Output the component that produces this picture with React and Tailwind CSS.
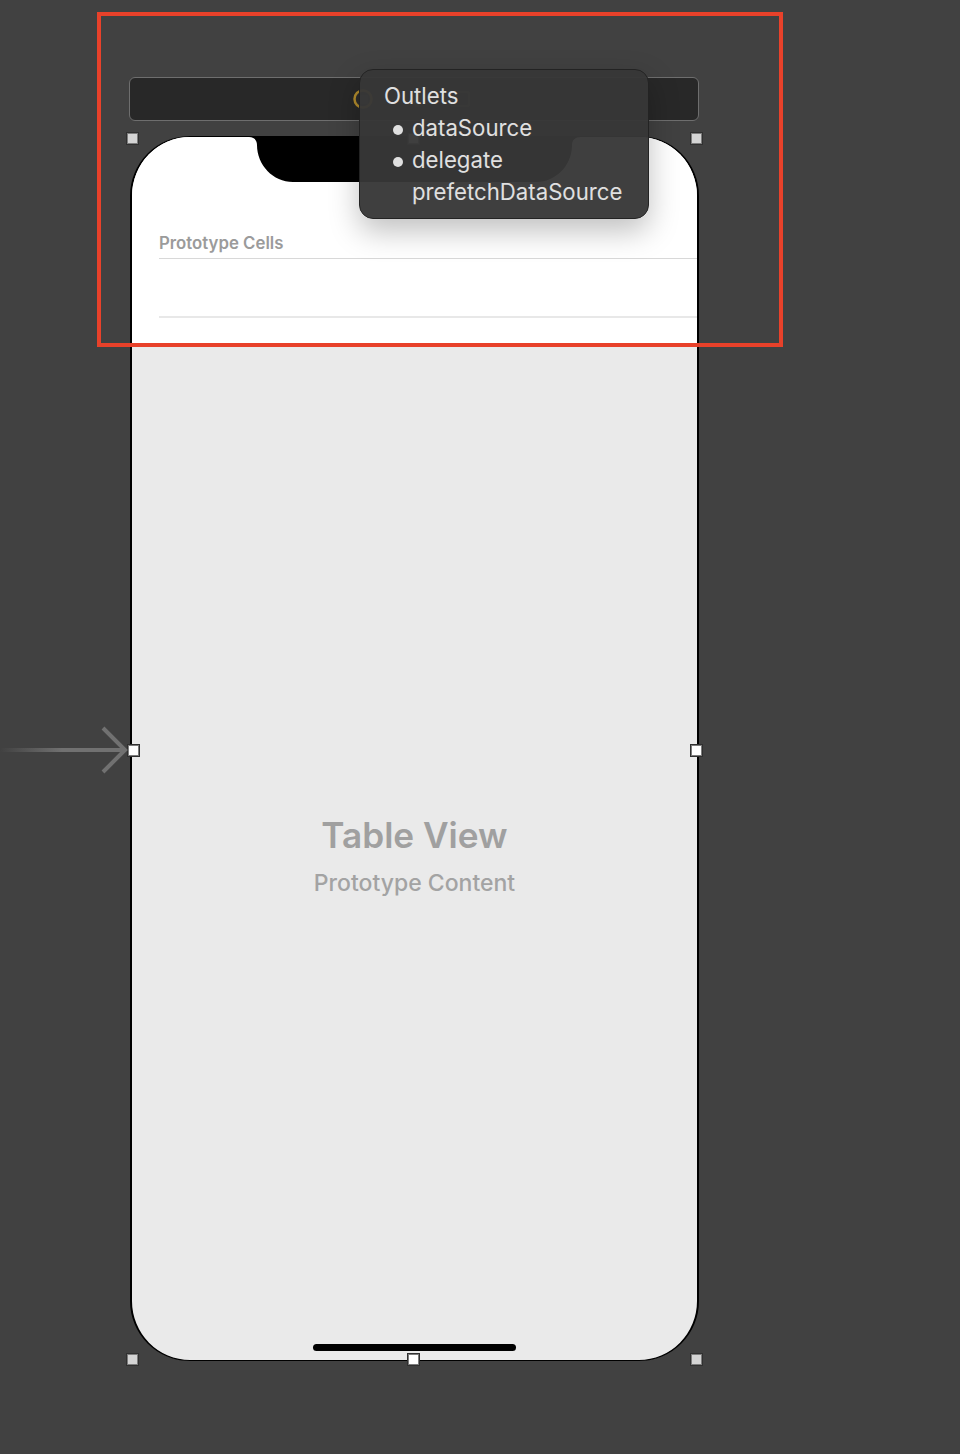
const font = { fontFamily: 'Inter, "Noto Sans", sans-serif' };

function Handle({ cls, light }) {
  return (
    <div
      className={`absolute h-[13px] w-[13px] border border-[#303030] shadow-[inset_0_0_0_1px_#7c7c7c] ${light ? "bg-white" : "bg-[#d4d4d4]"} ${cls}`}
    />
  );
}

function Outlet({ on, children }) {
  return (
    <div className="flex h-8 items-center">
      <span className="flex w-[52px] justify-end pr-[9px]">
        {on && <span className="mt-[3px] h-[10px] w-[10px] rounded-full bg-[#e0e0e0]" />}
      </span>
      <span>{children}</span>
    </div>
  );
}

export default function App() {
  return (
    <div className="relative h-[1454px] w-[960px] overflow-hidden bg-[#414141] pt-[77px]" style={font}>
      {/* Scene dock */}
      <div className="ml-[129px] flex h-[44px] w-[570px] items-center rounded-[6px] border border-[#6e6e6e] bg-[#282828] pl-[223px]">
        <svg width="20" height="20" viewBox="0 0 20 20" fill="none">
          <circle cx="10" cy="10" r="8.5" stroke="#b08a2c" strokeWidth="2.5" fill="#2c2c2c" />
          <rect x="6" y="6" width="9" height="9" rx="1" fill="#3a3a3a" />
        </svg>
        <svg className="ml-[34px]" width="20" height="20" viewBox="0 0 20 20" fill="none">
          <path d="M10 2l7 4v8l-7 4-7-4V6z" fill="#6e5a20" />
        </svg>
        <svg className="ml-[22px]" width="22" height="20" viewBox="0 0 22 20" fill="none">
          <rect x="2" y="3" width="18" height="14" rx="2" stroke="#5d5d3c" strokeWidth="2" />
        </svg>
      </div>

      {/* Device */}
      <div className="relative ml-[130px] mt-[15px] flex h-[1225px] w-[569px] flex-col overflow-hidden rounded-[60px] border-2 border-y border-black bg-[#eaeaea]">
        <div className="flex h-[208px] flex-col bg-white">
          <svg className="ml-[117px] shrink-0" width="332" height="46" viewBox="0 0 332 46">
            <path
              d="M0 0H332C326 0 323 3 323 8C323 30 305 45 288 45H44C24 45 8 28 8 8C8 3 5 0 0 0Z"
              fill="#000"
            />
          </svg>
          <div className="ml-[27px] mt-[46px] flex h-[30px] items-center border-b border-[#d8d8d8] text-[16.8px] font-semibold leading-none text-[#9b9b9b]">
            Prototype Cells
          </div>
          <div className="ml-[27px] h-[59px] border-b-2 border-[#e8e8e8]" />
        </div>
        <div className="flex flex-1 flex-col items-center">
          <div className="mt-[468px] text-[35.2px] font-semibold leading-[44px] text-[#a0a0a0]">Table View</div>
          <div className="mt-[12px] text-[23px] font-medium leading-[28px] text-[#a3a3a3]">Prototype Content</div>
          <div className="mt-auto mb-[9px] h-[7px] w-[203px] rounded-full bg-black" />
        </div>
      </div>

      {/* Selection handles */}
      <Handle cls="left-[126px] top-[132px]" />
      <Handle cls="left-[690px] top-[132px]" />
      <Handle cls="left-[126.5px] top-[744px]" light />
      <Handle cls="left-[690px] top-[744px]" light />
      <Handle cls="left-[126px] top-[1353px]" />
      <Handle cls="left-[407px] top-[1353px]" light />
      <Handle cls="left-[690px] top-[1353px]" />
      <Handle cls="left-[407px] top-[132px]" light />

      {/* Initial view controller arrow */}
      <svg className="absolute left-0 top-[720px]" width="130" height="60" viewBox="0 0 130 60" fill="none">
        <defs>
          <linearGradient id="fade" x1="0" x2="125" y1="0" y2="0" gradientUnits="userSpaceOnUse">
            <stop offset="0" stopColor="#717171" stopOpacity="0" />
            <stop offset="0.5" stopColor="#717171" />
            <stop offset="1" stopColor="#717171" />
          </linearGradient>
        </defs>
        <rect x="0" y="28" width="125" height="4" fill="url(#fade)" />
        <path d="M103 8L125 30L103 52" stroke="#717171" strokeWidth="4" />
      </svg>

      {/* Outlets popover */}
      <div className="absolute left-[359px] top-[69px] h-[150px] w-[290px] rounded-[14px] border border-[#232323] bg-[#373737]/[0.96] pt-[10px] text-[22.2px] leading-8 text-[#e0e0e0] shadow-[0_12px_30px_rgba(0,0,0,0.25)]">
        <div className="flex h-8 items-center pl-6">Outlets</div>
        <Outlet on>dataSource</Outlet>
        <Outlet on>delegate</Outlet>
        <Outlet>prefetchDataSource</Outlet>
      </div>

      {/* Annotation frame */}
      <div className="pointer-events-none absolute left-[97px] top-3 h-[335px] w-[686px] border-4 border-[#e8412a]" />
    </div>
  );
}
